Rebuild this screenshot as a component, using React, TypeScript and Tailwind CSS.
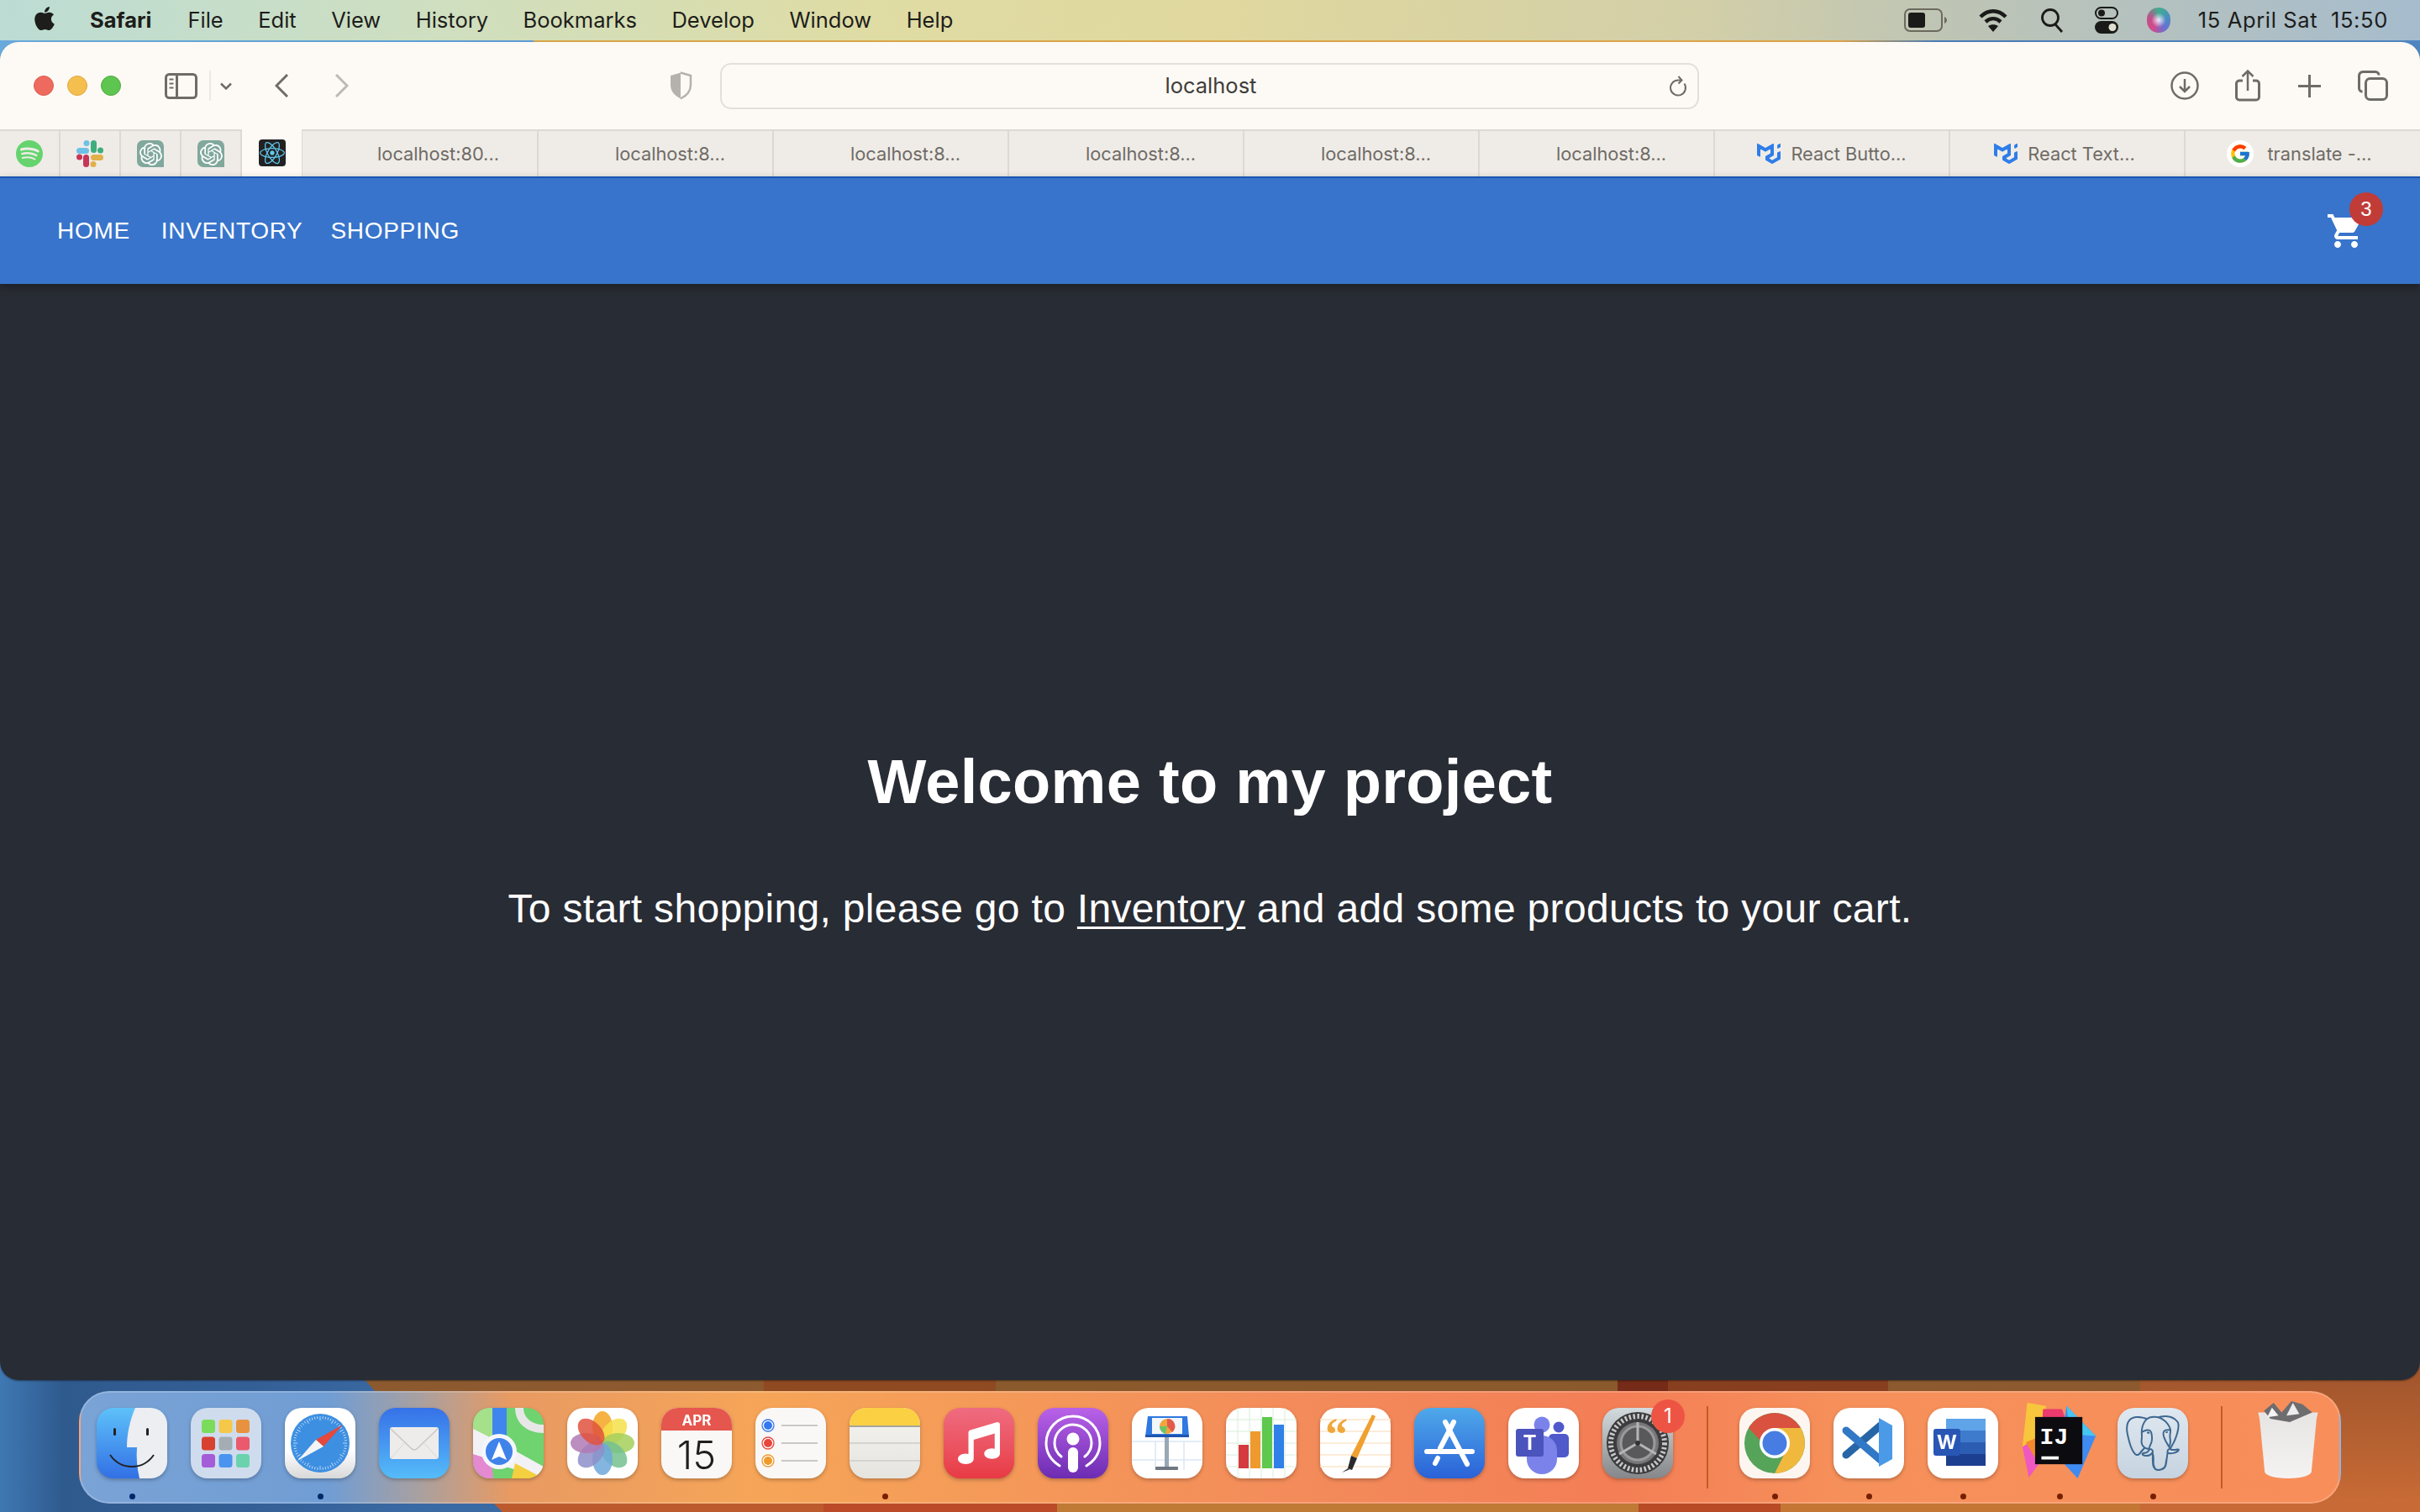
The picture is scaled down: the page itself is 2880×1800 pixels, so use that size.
import { FaApple, FaMusic, FaReact } from 'react-icons/fa'
import { FcGoogle } from 'react-icons/fc'
import { SiMui, SiOpenai, SiPostgresql, SiSpotify } from 'react-icons/si'
import type { ReactNode } from 'react'

const menuItems = ['File', 'Edit', 'View', 'History', 'Bookmarks', 'Develop', 'Window', 'Help']

function Wallpaper() {
  return (
    <svg className="absolute inset-0" width="2880" height="1800" viewBox="0 0 2880 1800">
      <defs>
        <linearGradient id="wallBlue" x1="0" x2="1" y1="0" y2="0">
          <stop offset="0" stopColor="#3f78b3" />
          <stop offset="0.15" stopColor="#2f5a8e" />
          <stop offset="0.6" stopColor="#345f96" />
          <stop offset="1" stopColor="#3a6aa4" />
        </linearGradient>
        <linearGradient id="wallRight" x1="0" x2="0" y1="0" y2="1">
          <stop offset="0" stopColor="#8f4c28" />
          <stop offset="1" stopColor="#cb6c36" />
        </linearGradient>
        <linearGradient id="wallTop" x1="0" x2="1" y1="0" y2="0">
          <stop offset="0" stopColor="#6aa9dc" />
          <stop offset="0.22" stopColor="#5c9dd6" />
          <stop offset="0.221" stopColor="#d9a84a" />
          <stop offset="0.76" stopColor="#dca548" />
          <stop offset="0.8" stopColor="#4a7cb8" />
          <stop offset="1" stopColor="#4f86c0" />
        </linearGradient>
      </defs>
      <rect width="2880" height="110" fill="url(#wallTop)" />
      <rect y="1560" width="500" height="240" fill="url(#wallBlue)" />
      <rect y="1560" x="500" width="400" height="240" fill="#3a6aa4" />
      <polygon points="432,1640 2880,1640 2880,1800 598,1800" fill="#bc5a2e" />
      <rect x="909" y="1640" width="276" height="16" fill="#8f4a22" />
      <polygon points="432,1640 909,1640 909,1656 446,1656" fill="#8c5a2e" />
      <rect x="1185" y="1640" width="740" height="16" fill="#8a5a2c" />
      <rect x="1925" y="1640" width="60" height="16" fill="#752b18" />
      <rect x="1985" y="1640" width="262" height="16" fill="#883f20" />
      <rect x="2247" y="1640" width="300" height="16" fill="#8c5a2e" />
      <rect x="2547" y="1560" width="333" height="240" fill="url(#wallRight)" />
      <rect x="2547" y="1788" width="333" height="12" fill="#c76a35" />
      <rect x="980" y="1788" width="278" height="12" fill="#bb4a28" />
      <rect x="1258" y="1788" width="692" height="12" fill="#bf7a35" />
      <rect x="1950" y="1788" width="169" height="12" fill="#b84a25" />
      <rect x="2119" y="1788" width="428" height="12" fill="#c47735" />
    </svg>
  )
}

function MenuBar() {
  return (
    <div className="flex h-[48px] items-center bg-[linear-gradient(90deg,#bcdcd4_0%,#cfdfc0_18%,#dfdca4_36%,#e0d89e_50%,#d3cfa8_70%,#bfc5b4_80%,#a6bccd_100%)] pl-[39px] pr-[38px] text-[25.5px] text-[#1d1d1b]">
      <FaApple className="h-[32px] w-[28px] -translate-y-[2px]" />
      <span className="ml-[40px] font-bold">Safari</span>
      <div className="ml-[43px] flex gap-[41.5px]">
        {menuItems.map((item) => (
          <span key={item}>{item}</span>
        ))}
      </div>
      <div className="ml-auto flex items-center">
        <svg width="52" height="28" viewBox="0 0 52 28">
          <rect x="1" y="1" width="44" height="26" rx="6" fill="none" stroke="#6b6a5f" strokeWidth="2" />
          <rect x="5" y="5" width="20" height="18" rx="3" fill="#1a1a18" />
          <path d="M48 10c2 1 3 2.5 3 4s-1 3-3 4z" fill="#6b6a5f" />
        </svg>
        <svg className="ml-[37px]" width="34" height="30" viewBox="0 0 34 30" fill="none" stroke="#1a1a18" strokeWidth="4.5">
          <path d="M2 11c9-9 21-9 30 0" />
          <path d="M8 17c5.500-5 12.500-5 18 0" />
          <path d="M17 29l-6-7c3.500-2.500 8.500-2.500 12 0z" fill="#1a1a18" stroke="none" />
        </svg>
        <svg className="ml-[40px]" width="26" height="30" viewBox="0 0 26 30" fill="none" stroke="#1a1a18" strokeWidth="2.8">
          <circle cx="11" cy="12" r="9.500" />
          <path d="M17 20l8 9" />
        </svg>
        <svg className="ml-[38px]" width="28" height="32" viewBox="0 0 28 32">
          <rect x="1" y="1" width="26" height="13" rx="6.500" fill="none" stroke="#1a1a18" strokeWidth="2" />
          <circle cx="8" cy="7.500" r="4" fill="#1a1a18" />
          <rect x="0" y="17" width="28" height="15" rx="7.500" fill="#1a1a18" />
          <circle cx="21" cy="24.500" r="4.500" fill="#dfe0d0" />
        </svg>
        <div className="ml-[34px] h-[30px] w-[28px] rounded-full bg-[radial-gradient(circle,#efe6f8_0%,transparent_42%),conic-gradient(#3fae8f,#4a8fc0,#6a6fd0,#d24a8a,#c0508a,#3fae8f)]" />
        <span className="ml-[33px] whitespace-pre tracking-[0.65px]">15 April Sat  15:50</span>
      </div>
    </div>
  )
}

function Toolbar() {
  const stroke = '#6f6b65'
  return (
    <div className="flex h-[104px] items-center bg-[#fdfaf5] pl-[40px]">
      <div className="flex gap-[16px]">
        <div className="h-[24px] w-[24px] rounded-full border border-[#dd5b50] bg-[#ee6a5e]" />
        <div className="h-[24px] w-[24px] rounded-full border border-[#dfa93e] bg-[#f5bf4f]" />
        <div className="h-[24px] w-[24px] rounded-full border border-[#4fab40] bg-[#5fc551]" />
      </div>
      <svg className="ml-[52px]" width="39" height="31" viewBox="0 0 39 31" fill="none" stroke={stroke} strokeWidth="3">
        <rect x="1.500" y="1.500" width="36" height="28" rx="4" />
        <path d="M14.500 2v27" />
        <path d="M5.500 7.500h5M5.500 12.500h5M5.500 17.500h5" strokeWidth="2" />
      </svg>
      <div className="ml-[14px] h-[36px] w-[2px] bg-[#ece9e4]" />
      <svg className="ml-[11px]" width="14" height="9" viewBox="0 0 14 9" fill="none" stroke={stroke} strokeWidth="2.500">
        <path d="M1 1.500l6 6 6-6" />
      </svg>
      <svg className="ml-[51px]" width="16" height="28" viewBox="0 0 16 28" fill="none" stroke={stroke} strokeWidth="3">
        <path d="M15 1L2 14l13 13" />
      </svg>
      <svg className="ml-[56px]" width="16" height="28" viewBox="0 0 16 28" fill="none" stroke="#bdbab5" strokeWidth="3">
        <path d="M1 1l13 13L1 27" />
      </svg>
      <svg className="ml-[381px]" width="28" height="34" viewBox="0 0 28 34">
        <path d="M14 1.500L2 5v11c0 8 5 13 12 16.500z" fill="#b5b2ad" />
        <path d="M14 1.500L26 5v11c0 8-5 13-12 16.500" fill="none" stroke="#b5b2ad" strokeWidth="2.500" />
      </svg>
      <div className="relative ml-[33px] flex h-[55px] w-[1165px] items-center justify-center rounded-[13px] border-[2px] border-[#e3e0db] pl-[3px] text-[25.5px] text-[#3f3d3a]">
        localhost
        <svg className="absolute right-[11px] top-[13px]" width="24" height="26" viewBox="0 0 24 26" fill="none" stroke={stroke} strokeWidth="2">
          <path d="M19.500 9.500a9 9 0 1 1-7.500-4h4" />
          <path d="M12.500 1l4 4.500-4 4" />
        </svg>
      </div>
      <svg className="ml-[561px]" width="34" height="34" viewBox="0 0 34 34" fill="none" stroke={stroke} strokeWidth="2.500">
        <circle cx="17" cy="17" r="15.500" />
        <path d="M17 9v15M11 18l6 6 6-6" />
      </svg>
      <svg className="ml-[43px]" width="30" height="38" viewBox="0 0 30 38" fill="none" stroke={stroke} strokeWidth="3">
        <path d="M9 13H5a3.500 3.500 0 0 0-3.500 3.500v16A3.500 3.500 0 0 0 5 36h20a3.500 3.500 0 0 0 3.500-3.500v-16A3.500 3.500 0 0 0 25 13h-4" />
        <path d="M15 25V2M8.500 8L15 1.500 21.500 8" strokeWidth="2.500" />
      </svg>
      <svg className="ml-[45px]" width="27" height="27" viewBox="0 0 27 27" fill="none" stroke={stroke} strokeWidth="3">
        <path d="M13.500 0v27M0 13.500h27" />
      </svg>
      <svg className="ml-[44px]" width="36" height="36" viewBox="0 0 36 36" fill="none" stroke={stroke} strokeWidth="3">
        <rect x="9.500" y="9.500" width="25" height="25" rx="5" />
        <path d="M5.500 25A4 4 0 0 1 1.500 21V6a4.500 4.500 0 0 1 4.500-4.500h15a4 4 0 0 1 4 4" />
      </svg>
    </div>
  )
}

function SlackIcon() {
  return (
    <svg width="32" height="32" viewBox="0 0 32 32">
      <rect x="0" y="9" width="15" height="7" rx="3.500" fill="#6fc0e6" />
      <circle cx="12" cy="3.500" r="3.500" fill="#6fc0e6" />
      <rect x="17" y="0" width="7" height="15" rx="3.500" fill="#3fae7c" />
      <circle cx="28.500" cy="12" r="3.500" fill="#3fae7c" />
      <rect x="17" y="17" width="15" height="7" rx="3.500" fill="#e2b04a" />
      <circle cx="20" cy="28.500" r="3.500" fill="#e2b04a" />
      <rect x="8" y="17" width="7" height="15" rx="3.500" fill="#c7355a" />
      <circle cx="3.500" cy="20" r="3.500" fill="#c7355a" />
    </svg>
  )
}

function PinnedTab({ children, active }: { children: ReactNode; active?: boolean }) {
  return (
    <div
      className={
        active
          ? 'flex w-[71px] items-center justify-center bg-[#fdfaf5]'
          : 'flex w-[72px] items-center justify-center border-r-[2px] border-t-[2px] border-[#dcd9d4]'
      }
    >
      {children}
    </div>
  )
}

function Tab({ label, icon, className }: { label: string; icon?: ReactNode; className?: string }) {
  return (
    <div className={`flex w-[280px] items-center justify-center gap-[12px] border-r-[2px] border-t-[2px] border-[#dcd9d4] text-[21.8px] text-[#6f6b66] ${className ?? ''}`}>
      {icon}
      <span>{label}</span>
    </div>
  )
}

function TabBar() {
  return (
    <div className="flex h-[56px] bg-[#efece7]">
      <PinnedTab>
        <SiSpotify className="h-[32px] w-[32px] text-[#65d46e]" />
      </PinnedTab>
      <PinnedTab>
        <SlackIcon />
      </PinnedTab>
      <PinnedTab>
        <div className="flex h-[32px] w-[32px] items-center justify-center rounded-[7px] rounded-br-none bg-[#80a89c]">
          <SiOpenai className="h-[27px] w-[27px] text-white" />
        </div>
      </PinnedTab>
      <PinnedTab>
        <div className="flex h-[32px] w-[32px] items-center justify-center rounded-[7px] rounded-br-none bg-[#80a89c]">
          <SiOpenai className="h-[27px] w-[27px] text-white" />
        </div>
      </PinnedTab>
      <PinnedTab active>
        <div className="flex h-[32px] w-[32px] items-center justify-center rounded-[4px] bg-[#222222]">
          <FaReact className="h-[30px] w-[30px] text-[#61c8ee]" />
        </div>
      </PinnedTab>
      <div className="w-[1px] border-t-[2px] border-[#dcd9d4] bg-[#dcd9d4]" />
      <Tab label="localhost:80..." className="w-[281px] pl-[44px]" />
      <Tab label="localhost:8..." className="pl-[35px]" />
      <Tab label="localhost:8..." className="pl-[35px]" />
      <Tab label="localhost:8..." className="pl-[35px]" />
      <Tab label="localhost:8..." className="pl-[35px]" />
      <Tab label="localhost:8..." className="pl-[35px]" />
      <Tab label="React Butto..." icon={<SiMui className="h-[28px] w-[28px] text-[#2f7de8]" />} />
      <Tab label="React Text..." className="pr-[6px]" icon={<SiMui className="h-[28px] w-[28px] text-[#2f7de8]" />} />
      <div className="flex flex-1 items-center justify-center gap-[16px] border-t-[2px] border-[#dcd9d4] pr-[8px] text-[21.8px] text-[#6f6b66]">
        <div className="flex h-[32px] w-[32px] items-center justify-center rounded-full bg-white">
          <FcGoogle className="h-[26px] w-[26px]" />
        </div>
        <span>translate -...</span>
      </div>
    </div>
  )
}

function NavBar() {
  return (
    <nav className="z-10 flex h-[128px] items-center border-t-[2px] border-[#1b55b0] bg-[#3874cb] pl-[68px] pr-[64px] text-[28px] tracking-[0.7px] text-white shadow-[0_4px_10px_rgba(0,0,0,0.3)]">
      <a>HOME</a>
      <a className="ml-[37px]">INVENTORY</a>
      <a className="ml-[33px]">SHOPPING</a>
      <div className="relative ml-auto h-[48px] w-[48px]">
        <svg width="48" height="48" viewBox="0 0 24 24" fill="#fff">
          <path d="M7 18c-1.100 0-1.990.9-1.990 2S5.900 22 7 22s2-.9 2-2-.9-2-2-2zM1 2v2h2l3.600 7.590-1.350 2.450c-.16.28-.25.61-.25.96 0 1.100.9 2 2 2h12v-2H7.420c-.14 0-.25-.11-.25-.25l.03-.12.9-1.630h7.450c.75 0 1.410-.41 1.750-1.030l3.580-6.470c.08-.14.12-.31.12-.48 0-.55-.45-1-1-1H5.210l-.94-2H1zm16 16c-1.100 0-1.990.9-1.990 2s.89 2 1.990 2 2-.9 2-2-.9-2-2-2z" />
        </svg>
        <span className="absolute left-[28px] top-[-22px] flex h-[40px] w-[40px] items-center justify-center rounded-full bg-[#c13c37] text-[24px] tracking-normal text-white">
          3
        </span>
      </div>
    </nav>
  )
}

function Home() {
  return (
    <main className="flex flex-1 flex-col items-center bg-[#282c34] pt-[551px] text-white">
      <h1 className="text-[74px] font-bold leading-[84px] tracking-[0.3px]">Welcome to my project</h1>
      <p className="mt-[79px] text-[48px] leading-[60px] tracking-[0.32px]">
        To start shopping, please go to <a className="underline decoration-[3px] underline-offset-[5px]">Inventory</a> and add some products to your cart.
      </p>
    </main>
  )
}

// dock icons, each drawn on an 84 x 84 box
function IconBox({ children }: { children: ReactNode }) {
  return (
    <svg width="84" height="84" viewBox="0 0 84 84" className="drop-shadow-[0_2px_2px_rgba(0,0,0,0.25)]">
      {children}
    </svg>
  )
}

function Finder() {
  return (
    <IconBox>
      <defs>
        <linearGradient id="finderBlue" x1="0" x2="0" y1="0" y2="1">
          <stop offset="0" stopColor="#5ec1f9" />
          <stop offset="1" stopColor="#3270e5" />
        </linearGradient>
        <clipPath id="finderClip">
          <rect width="84" height="84" rx="20" />
        </clipPath>
      </defs>
      <g clipPath="url(#finderClip)">
        <rect width="84" height="84" fill="url(#finderBlue)" />
        <path d="M46 0C40 14 36 30 36 47h12c-1 12 0 24 3 37h33V0z" fill="#eceef2" />
      </g>
      <rect x="20" y="24" width="3" height="9" rx="1.500" fill="#222" />
      <rect x="59" y="24" width="3" height="9" rx="1.500" fill="#222" />
      <path d="M16 56c7 10 17 14 26 14s19-4 26-14" fill="none" stroke="#222" strokeWidth="2" />
    </IconBox>
  )
}

function Launchpad() {
  const colors = ['#7bdc5c', '#f5c84a', '#e8923f', '#d8402f', '#a3adb3', '#ea5a6c', '#a55cd8', '#4a94f0', '#6ad3ad']
  return (
    <IconBox>
      <rect width="84" height="84" rx="20" fill="#cfdcee" />
      {colors.map((color, i) => (
        <rect key={color} x={13 + (i % 3) * 20.500} y={14 + Math.floor(i / 3) * 20.500} width="16" height="16" rx="3.500" fill={color} />
      ))}
    </IconBox>
  )
}

function Safari() {
  const ticks = Array.from({ length: 60 }, (_, i) => i * 6)
  return (
    <IconBox>
      <defs>
        <linearGradient id="safariBg" x1="0" x2="0" y1="0" y2="1">
          <stop offset="0.6" stopColor="#ffffff" />
          <stop offset="1" stopColor="#d8d8d8" />
        </linearGradient>
      </defs>
      <rect width="84" height="84" rx="20" fill="url(#safariBg)" />
      <circle cx="42" cy="42" r="35" fill="#3d8fe2" />
      {ticks.map((deg) => (
        <line key={deg} x1="42" y1="10" x2="42" y2={deg % 30 === 0 ? 15 : 13} stroke="#d9ecfa" strokeWidth="0.8" transform={`rotate(${deg} 42 42)`} />
      ))}
      <polygon points="69,20 37,38 46,46" fill="#e5483c" />
      <polygon points="15,63 37,38 46,46" fill="#f4f4f4" />
    </IconBox>
  )
}

function Mail() {
  return (
    <IconBox>
      <defs>
        <linearGradient id="mailBg" x1="0" x2="0" y1="0" y2="1">
          <stop offset="0" stopColor="#3671e8" />
          <stop offset="1" stopColor="#55bcf9" />
        </linearGradient>
      </defs>
      <rect width="84" height="84" rx="20" fill="url(#mailBg)" />
      <rect x="13" y="23" width="58" height="38" rx="3" fill="#eeeceb" />
      <path d="M14 25l24 23c2.500 2.400 5.500 2.400 8 0l24-23" fill="none" stroke="#c9c7c5" strokeWidth="1.500" />
      <path d="M14 60l18-20M70 60L52 40" stroke="#d8d6d4" strokeWidth="1" />
    </IconBox>
  )
}

function Maps() {
  return (
    <IconBox>
      <defs>
        <clipPath id="mapsClip">
          <rect width="84" height="84" rx="20" />
        </clipPath>
      </defs>
      <g clipPath="url(#mapsClip)">
        <rect width="84" height="84" fill="#6fd36f" />
        <rect x="0" width="24" height="34" fill="#a5e08a" />
        <polygon points="0,25 0,58 84,84 84,70 30,40" fill="#f2f2f6" />
        <polygon points="0,55 22,62 24,84 0,84" fill="#e48ad0" />
        <polygon points="46,84 50,66 84,84" fill="#f4cf3f" />
        <path d="M50 0c0 18 14 30 34 30v-10C70 20 60 12 60 0z" fill="#e7e7e7" />
        <rect x="23" width="17" height="36" fill="#4085ee" />
        <circle cx="31" cy="52" r="21" fill="#f4f6fb" />
        <circle cx="31" cy="52" r="16" fill="#3f82ea" />
        <path d="M31 40l9 22-9-4-9 4z" fill="#fff" />
      </g>
    </IconBox>
  )
}

function Photos() {
  const petals = ['#f5a623', '#f5e04a', '#a5cf5a', '#74c18e', '#6fa8dc', '#8d8fc9', '#b07ab5', '#e0523d']
  return (
    <IconBox>
      <rect width="84" height="84" rx="20" fill="#ffffff" />
      {petals.map((color, i) => (
        <ellipse key={color} cx="42" cy="23" rx="12" ry="19" fill={color} opacity="0.85" transform={`rotate(${i * 45} 42 42)`} />
      ))}
    </IconBox>
  )
}

function Calendar() {
  return (
    <IconBox>
      <defs>
        <clipPath id="calClip">
          <rect width="84" height="84" rx="20" />
        </clipPath>
      </defs>
      <g clipPath="url(#calClip)">
        <rect width="84" height="84" fill="#f9f8f6" />
        <rect width="84" height="27" fill="#e5564e" />
      </g>
      <text x="42" y="21" textAnchor="middle" fontSize="17" fontWeight="700" fill="#fff" fontFamily="Inter, sans-serif">APR</text>
      <text x="42" y="73" textAnchor="middle" fontSize="47" fontWeight="300" fill="#1e1e1e" fontFamily="Inter, sans-serif">15</text>
    </IconBox>
  )
}

function Reminders() {
  const rows = [
    { y: 21, color: '#3478f0' },
    { y: 42, color: '#e9463d' },
    { y: 63, color: '#ef9a2b' },
  ]
  return (
    <IconBox>
      <rect width="84" height="84" rx="20" fill="#f9f8f6" />
      {rows.map((row) => (
        <g key={row.y}>
          <circle cx="15" cy={row.y} r="7" fill="#fff" stroke={row.color} strokeWidth="1.300" />
          <circle cx="15" cy={row.y} r="5" fill={row.color} />
          <rect x="31" y={row.y - 1} width="43" height="2" fill="#c9c8c6" />
        </g>
      ))}
    </IconBox>
  )
}

function Notes() {
  return (
    <IconBox>
      <defs>
        <clipPath id="notesClip">
          <rect width="84" height="84" rx="20" />
        </clipPath>
        <linearGradient id="notesBg" x1="0" x2="0" y1="0" y2="1">
          <stop offset="0" stopColor="#f6f4f0" />
          <stop offset="1" stopColor="#e6e4df" />
        </linearGradient>
      </defs>
      <g clipPath="url(#notesClip)">
        <rect width="84" height="84" fill="url(#notesBg)" />
        <rect width="84" height="21" fill="#fbd042" />
        <rect y="21" width="84" height="2" fill="#a9a69f" />
        <rect y="41" width="84" height="2" fill="#d6d4cf" />
        <rect y="62" width="84" height="2" fill="#d6d4cf" />
      </g>
    </IconBox>
  )
}

function Music() {
  return (
    <div className="flex h-[84px] w-[84px] items-center justify-center rounded-[20px] bg-linear-to-b from-[#ef6b80] to-[#e83a44] drop-shadow-[0_2px_2px_rgba(0,0,0,0.25)]">
      <FaMusic className="h-[58px] w-[50px] text-white" />
    </div>
  )
}

function Podcasts() {
  return (
    <IconBox>
      <defs>
        <linearGradient id="podBg" x1="0" x2="0" y1="0" y2="1">
          <stop offset="0" stopColor="#b962e8" />
          <stop offset="1" stopColor="#6c2cb2" />
        </linearGradient>
      </defs>
      <rect width="84" height="84" rx="20" fill="url(#podBg)" />
      <g fill="none" stroke="#fff" strokeWidth="3" strokeLinecap="round">
        <path d="M26 69C15 62 10 52 10 42a32 32 0 0 1 64 0c0 10-5 20-16 27" />
        <path d="M28 58c-5-4-8-10-8-16a22 22 0 0 1 44 0c0 6-3 12-8 16" />
      </g>
      <circle cx="42" cy="37" r="7.500" fill="#fff" />
      <rect x="36" y="47" width="12" height="30" rx="6" fill="#fff" />
    </IconBox>
  )
}

function Keynote() {
  return (
    <IconBox>
      <rect width="84" height="84" rx="20" fill="#fff" />
      <path d="M0 40h84M0 62h84M28 40v34M62 40v34" stroke="#dce8f4" strokeWidth="1.500" />
      <rect x="39" y="28" width="5" height="44" fill="#9aa7b5" />
      <rect x="28" y="70" width="27" height="4" rx="1" fill="#6f7882" />
      <polygon points="19,10 66,10 68,34 16,34" fill="#2f78e0" />
      <rect x="16" y="32" width="52" height="3" fill="#1f55b0" />
      <rect x="24" y="12" width="36" height="19" fill="#f2f6fb" />
      <circle cx="42" cy="22" r="9" fill="#f0a640" />
      <path d="M42 22V13a9 9 0 0 1 6 16z" fill="#e35a4a" />
      <path d="M42 22l-2 9a9 9 0 0 1-7-9z" fill="#6cc46a" />
    </IconBox>
  )
}

function Numbers() {
  return (
    <IconBox>
      <rect width="84" height="84" rx="20" fill="#fff" />
      <path d="M0 14h84M0 28h84M0 42h84M0 56h84M0 70h84M14 0v84M28 0v84M42 0v84M56 0v84M70 0v84" stroke="#d6eed8" strokeWidth="1" />
      <rect x="15" y="44" width="12" height="28" fill="#d43a3e" />
      <rect x="29" y="28" width="12" height="44" fill="#ef9a2e" />
      <rect x="43" y="11" width="12" height="61" fill="#5fc84f" />
      <rect x="57" y="20" width="12" height="52" fill="#2f80e8" />
    </IconBox>
  )
}

function Pages() {
  return (
    <IconBox>
      <rect width="84" height="84" rx="20" fill="#fff" />
      <path d="M0 14h84M0 28h84M0 42h84M0 56h84M0 70h84" stroke="#fbe6cc" strokeWidth="1.500" />
      <text x="6" y="50" fontSize="54" fontWeight="700" fill="#f0a73a" fontFamily="'Liberation Serif', serif">“</text>
      <polygon points="62,8 66,10 44,60 37,57" fill="#f0a030" />
      <polygon points="37,57 44,60 38,74 33,72" fill="#2a2a2a" />
      <polygon points="33,72 36,73 26,77" fill="#444" />
    </IconBox>
  )
}

function AppStore() {
  return (
    <IconBox>
      <defs>
        <linearGradient id="storeBg" x1="0" x2="0" y1="0" y2="1">
          <stop offset="0" stopColor="#4fa9ea" />
          <stop offset="1" stopColor="#2a62d8" />
        </linearGradient>
      </defs>
      <rect width="84" height="84" rx="20" fill="url(#storeBg)" />
      <g stroke="#fff" strokeWidth="6" strokeLinecap="round">
        <path d="M37 17l26 50" />
        <path d="M47 17L31 48" />
        <path d="M25 66l3-6" />
        <path d="M15 52h54" />
      </g>
    </IconBox>
  )
}

function Teams() {
  return (
    <IconBox>
      <rect width="84" height="84" rx="20" fill="#fff" />
      <circle cx="60" cy="23" r="6.500" fill="#5059c9" />
      <rect x="48" y="31" width="24" height="28" rx="5" fill="#5059c9" />
      <circle cx="40" cy="20" r="9.500" fill="#7b83eb" />
      <rect x="22" y="33" width="36" height="46" rx="18" fill="#7b83eb" />
      <rect x="9" y="25" width="33" height="33" rx="3" fill="#4b53bc" />
      <text x="25.500" y="50" textAnchor="middle" fontSize="24" fontWeight="700" fill="#fff" fontFamily="Inter, sans-serif">T</text>
    </IconBox>
  )
}

function SystemSettings() {
  return (
    <IconBox>
      <defs>
        <linearGradient id="setBg" x1="0" x2="0" y1="0" y2="1">
          <stop offset="0" stopColor="#d3dbde" />
          <stop offset="1" stopColor="#85878a" />
        </linearGradient>
      </defs>
      <rect width="84" height="84" rx="20" fill="url(#setBg)" />
      <circle cx="42" cy="42" r="37" fill="#3c3c3e" />
      <circle cx="42" cy="42" r="32" fill="none" stroke="#c9c9c9" strokeWidth="6" strokeDasharray="2.500 2.500" />
      <circle cx="42" cy="42" r="25" fill="#77777a" />
      <circle cx="42" cy="42" r="20" fill="#59595c" stroke="#9a9a9c" strokeWidth="3" />
      <path d="M42 42V17M42 42L20 55M42 42l22 13" stroke="#b5b5b7" strokeWidth="3" />
      <circle cx="42" cy="42" r="3" fill="#333" />
    </IconBox>
  )
}

function Chrome() {
  return (
    <IconBox>
      <rect width="84" height="84" rx="20" fill="#fdf6f0" />
      <circle cx="42" cy="42" r="36" fill="#56a35a" />
      <path d="M73 24A36 36 0 0 1 42 78L56 50 42 24z" fill="#f0b93e" />
      <path d="M11 24A36 36 0 0 1 73 24H42L28 42z" fill="#d9513f" />
      <circle cx="42" cy="42" r="18" fill="#fff" />
      <circle cx="42" cy="42" r="14.500" fill="#477de2" />
    </IconBox>
  )
}

function VSCode() {
  return (
    <IconBox>
      <rect width="84" height="84" rx="20" fill="#fff" />
      <path d="M15 56l41-35" stroke="#2766a6" strokeWidth="9" strokeLinecap="round" />
      <path d="M15 27l41 35" stroke="#3178c6" strokeWidth="9" strokeLinecap="round" />
      <polygon points="54,12 70,21 70,61 54,70" fill="#4a9ae8" />
    </IconBox>
  )
}

function Word() {
  return (
    <IconBox>
      <rect width="84" height="84" rx="20" fill="#fff" />
      <rect x="22" y="13" width="47" height="14" fill="#5fa4e8" />
      <rect x="22" y="27" width="47" height="14" fill="#3f7bcc" />
      <rect x="22" y="41" width="47" height="14" fill="#2b5db3" />
      <rect x="22" y="55" width="47" height="14" fill="#1d3f8f" />
      <rect x="7" y="25" width="32" height="32" rx="3" fill="#2856b5" />
      <text x="23" y="49" textAnchor="middle" fontSize="23" fontWeight="700" fill="#fff" fontFamily="Inter, sans-serif">W</text>
    </IconBox>
  )
}

function IntelliJ() {
  return (
    <svg width="94" height="96" viewBox="0 0 94 96" className="-mt-[6px]">
      <polygon points="6,0 30,4 24,40 0,56" fill="#f8c63c" />
      <polygon points="26,8 50,8 62,40 24,40" fill="#ea3a6e" />
      <polygon points="56,4 93,42 70,96 46,70" fill="#3e8bf2" />
      <polygon points="56,4 93,42 60,40" fill="#46c6f2" />
      <polygon points="0,56 24,40 34,60 8,95" fill="#ee58c0" />
      <polygon points="4,50 24,42 16,70" fill="#f48a2c" />
      <rect x="16" y="18" width="60" height="60" fill="#0c0c10" />
      <text x="22" y="52" fontSize="30" fontWeight="700" fill="#fff" fontFamily="'Liberation Mono', monospace">IJ</text>
      <rect x="24" y="68" width="22" height="4" fill="#fff" />
    </svg>
  )
}

function Postgres() {
  return (
    <div className="flex h-[84px] w-[84px] items-center justify-center rounded-[20px] bg-linear-to-b from-[#dfe8f0] to-[#c6d3e0] drop-shadow-[0_2px_2px_rgba(0,0,0,0.25)]">
      <SiPostgresql className="h-[66px] w-[66px] text-[#3d6790]" />
    </div>
  )
}

function Trash() {
  return (
    <svg width="76" height="96" viewBox="0 0 76 96" className="-mt-[8px]">
      <defs>
        <linearGradient id="trashBg" x1="0" x2="0" y1="0" y2="1">
          <stop offset="0" stopColor="#e6e5e4" />
          <stop offset="1" stopColor="#f4f3f2" />
        </linearGradient>
      </defs>
      <path d="M1 14c0 2 2 8 2 12l6 62c1 4 10 8 29 8s28-4 29-8l6-62c0-4 2-10 2-12z" fill="url(#trashBg)" />
      <polygon points="8,12 20,2 30,14 42,0 56,4 68,14 40,26 16,22" fill="#6d6d70" />
      <polygon points="18,8 26,18 12,20" fill="#f4f4f4" />
      <polygon points="44,2 52,16 36,18" fill="#ededed" />
    </svg>
  )
}

function DockItem({ children, running, dotColor, className }: { children: ReactNode; running?: boolean; dotColor?: string; className?: string }) {
  return (
    <div className={`flex h-[84px] flex-col items-center ${className ?? ''}`}>
      {children}
      {running && <div className={`absolute top-[120px] h-[7px] w-[7px] rounded-full ${dotColor ?? 'bg-[#762000]'}`} />}
    </div>
  )
}

function Dock() {
  return (
    <div className="relative ml-[94px] mt-[13px] flex h-[134px] w-[2692px] items-start rounded-[36px] border-[2px] border-white/20 bg-[linear-gradient(90deg,#7aa3d6_0%,#709dd4_11%,#a9a0a0_15%,#e89a62_19%,#f6a558_30%,#f38a5a_55%,#f47e56_68%,#f6905a_78%,#f88e5a_100%)] pl-[19px] pt-[18px]">
      <div className="flex gap-[28px]">
        <DockItem running dotColor="bg-[#00286a]"><Finder /></DockItem>
        <DockItem><Launchpad /></DockItem>
        <DockItem running dotColor="bg-[#00286a]"><Safari /></DockItem>
        <DockItem><Mail /></DockItem>
        <DockItem><Maps /></DockItem>
        <DockItem><Photos /></DockItem>
        <DockItem><Calendar /></DockItem>
        <DockItem><Reminders /></DockItem>
        <DockItem running><Notes /></DockItem>
        <DockItem><Music /></DockItem>
        <DockItem><Podcasts /></DockItem>
        <DockItem><Keynote /></DockItem>
        <DockItem><Numbers /></DockItem>
        <DockItem><Pages /></DockItem>
        <DockItem><AppStore /></DockItem>
        <DockItem><Teams /></DockItem>
        <div className="relative">
          <SystemSettings />
          <span className="absolute left-[58px] top-[-10px] flex h-[40px] w-[40px] items-center justify-center rounded-full bg-[#ee5443] text-[24px] text-white">
            1
          </span>
        </div>
      </div>
      <div className="ml-[40px] -mt-[2px] h-[98px] w-[2px] bg-[#c55a25]" />
      <DockItem running className="ml-[37px]"><Chrome /></DockItem>
      <DockItem running className="ml-[28px]"><VSCode /></DockItem>
      <DockItem running className="ml-[28px]"><Word /></DockItem>
      <DockItem running className="ml-[26px]"><IntelliJ /></DockItem>
      <DockItem running className="ml-[22px]"><Postgres /></DockItem>
      <div className="ml-[39px] -mt-[2px] h-[98px] w-[2px] bg-[#c55a25]" />
      <DockItem className="ml-[40px]"><Trash /></DockItem>
    </div>
  )
}

export default function App() {
  return (
    <div className="relative h-[1800px] w-[2880px] overflow-hidden font-['Liberation_Sans',sans-serif]">
      <Wallpaper />
      <div className="relative flex h-full flex-col">
        <div className="font-['Inter',sans-serif]">
          <MenuBar />
        </div>
        <div className="mt-[2px] flex h-[1593px] flex-col overflow-hidden rounded-[22px] shadow-[0_1px_2px_rgba(0,0,0,0.4)]">
          <div className="font-['Inter',sans-serif]">
            <Toolbar />
            <TabBar />
          </div>
          <NavBar />
          <Home />
        </div>
        <div className="font-['Inter',sans-serif]">
          <Dock />
        </div>
      </div>
    </div>
  )
}
